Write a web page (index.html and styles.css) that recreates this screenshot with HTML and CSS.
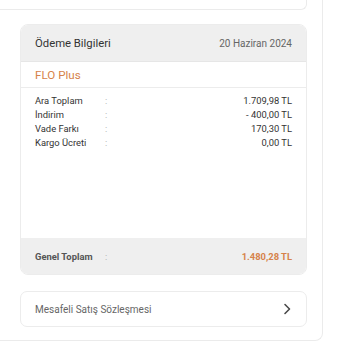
FILE: index.html
```html
<!DOCTYPE html>
<html lang="tr">
<head>
<meta charset="utf-8">
<link rel="stylesheet" href="styles.css">
</head>
<body>
<div class="outer">
  <div class="top-card"></div>
  <div class="pay-card">
    <div class="pay-head">
      <span class="pay-title">Ödeme Bilgileri</span>
      <span class="pay-date">20 Haziran 2024</span>
    </div>
    <div class="pay-brand">FLO Plus</div>
    <div class="pay-body">
      <div class="row"><span class="lbl">Ara Toplam</span><span class="colon">:</span><span class="val">1.709,98 TL</span></div>
      <div class="row"><span class="lbl">İndirim</span><span class="colon">:</span><span class="val">- 400,00 TL</span></div>
      <div class="row"><span class="lbl">Vade Farkı</span><span class="colon">:</span><span class="val">170,30 TL</span></div>
      <div class="row"><span class="lbl">Kargo Ücreti</span><span class="colon">:</span><span class="val">0,00 TL</span></div>
    </div>
    <div class="pay-foot">
      <span class="lbl">Genel Toplam</span><span class="colon">:</span><span class="val total">1.480,28 TL</span>
    </div>
  </div>
  <div class="link-card">
    <span>Mesafeli Satış Sözleşmesi</span>
    <svg class="chev" width="10" height="12" viewBox="0 0 10 12"><path d="M3 1.5 L7.5 6 L3 10.5" fill="none" stroke="#4a4a4a" stroke-width="1.6" stroke-linecap="round" stroke-linejoin="round"/></svg>
  </div>
</div>
</body>
</html>
```
FILE: styles.css
```css
html, body {
  margin: 0;
  padding: 0;
  background: #fff;
  font-family: Roboto, "Noto Sans", Arial, sans-serif;
}
.outer {
  width: 323px;
  height: 341px;
  box-sizing: border-box;
  border-right: 1px solid #ebebeb;
  border-bottom: 1px solid #ebebeb;
  border-bottom-right-radius: 8px;
  padding: 0 15px 0 20px;
}
.top-card {
  height: 10px;
  margin-left: -20px;
  box-sizing: border-box;
  border-right: 1px solid #ebebeb;
  border-bottom: 1px solid #ebebeb;
  border-bottom-right-radius: 6px;
}
.pay-card {
  margin-top: 14px;
  border: 1px solid #ececec;
  border-radius: 8px;
  overflow: hidden;
  display: flex;
  flex-direction: column;
  height: 251px;
  box-sizing: border-box;
}
.pay-head {
  height: 37px;
  background: #efefef;
  display: flex;
  align-items: center;
  justify-content: space-between;
  padding: 0 14px 0 14px;
  box-sizing: border-box;
  border-bottom: 1px solid #e6e6e6;
}
.pay-title {
  font-size: 11.3px;
  color: #333;
}
.pay-date {
  font-size: 10px;
  color: #666;
}
.pay-brand {
  height: 26px;
  display: flex;
  align-items: center;
  padding: 0 14px;
  font-size: 11.6px;
  color: #d6824a;
  border-bottom: 1px solid #ececec;
  box-sizing: border-box;
}
.pay-body {
  flex: 1;
  padding: 5px 14px 0 14px;
}
.row {
  display: flex;
  align-items: center;
  height: 14px;
  font-size: 9.4px;
  color: #333;
}
.lbl {
  width: 70px;
}
.colon {
  color: #aaa;
  flex: 1;
}
.val {
  text-align: right;
}
.pay-foot {
  height: 36px;
  background: #efefef;
  display: flex;
  align-items: center;
  padding: 0 14px;
  font-size: 9.4px;
  font-weight: bold;
  color: #555;
}
.pay-foot .colon {
  font-weight: normal;
}
.pay-foot .total {
  color: #d6824a;
}
.link-card {
  margin-top: 16px;
  height: 36px;
  box-sizing: border-box;
  border: 1px solid #ececec;
  border-radius: 7px;
  display: flex;
  align-items: center;
  justify-content: space-between;
  padding: 0 14px 0 14px;
  font-size: 10px;
  color: #666;
}
.chev {
  display: block;
}
```
